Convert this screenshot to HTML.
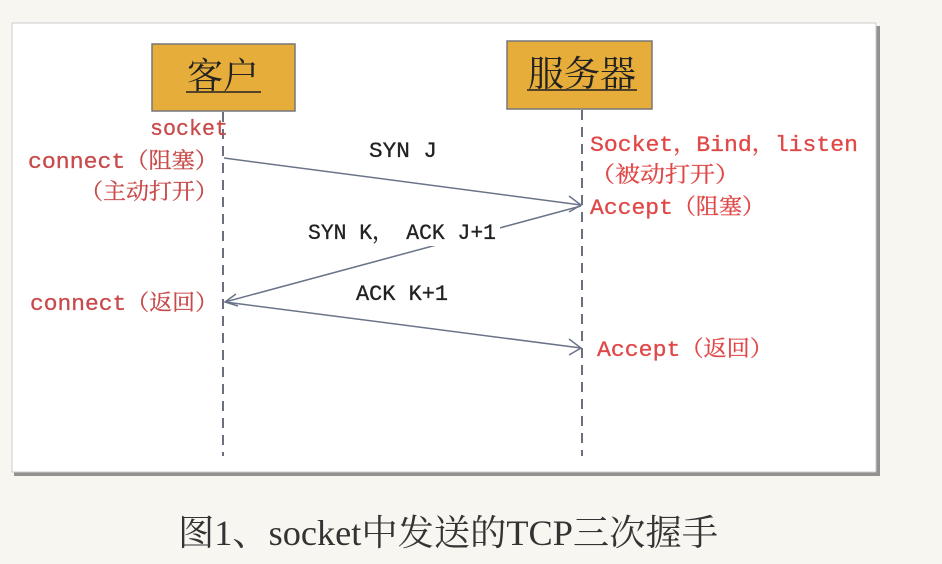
<!DOCTYPE html>
<html><head><meta charset="utf-8"><style>
html,body{margin:0;padding:0;background:#f8f6f0;width:942px;height:564px;overflow:hidden}
</style></head><body>
<svg width="942" height="564" style="position:absolute;left:0;top:0" font-family="Liberation Mono, Noto Serif CJK SC, monospace">
<rect x="14" y="26" width="866" height="450" fill="#666" opacity="0.7"/>
<rect x="12" y="23" width="864" height="449" fill="#fff" stroke="#ccc" stroke-width="1"/>
<rect x="152" y="44" width="143" height="67" fill="#e6ad3a" stroke="#777" stroke-width="1.5"/>
<rect x="507" y="41" width="145" height="68" fill="#e6ad3a" stroke="#777" stroke-width="1.5"/>
<text x="223" y="88" font-size="36" text-anchor="middle" fill="#222" font-family="Noto Serif CJK SC, serif">客户</text>
<line x1="186" y1="92" x2="261" y2="92" stroke="#222" stroke-width="1.5"/>
<text x="582" y="86" font-size="36" text-anchor="middle" fill="#222" font-family="Noto Serif CJK SC, serif">服务器</text>
<line x1="527" y1="90" x2="637" y2="90" stroke="#222" stroke-width="1.5"/>
<g stroke="#6a7080" stroke-width="2" stroke-dasharray="10,7">
<line x1="223" y1="112" x2="223" y2="456"/>
<line x1="582" y1="110" x2="582" y2="456"/>
</g>
<g stroke="#6a7488" stroke-width="1.5" fill="none">
<line x1="224" y1="158" x2="581" y2="205"/>
<line x1="581" y1="206" x2="225" y2="302"/>
<line x1="225" y1="302" x2="581" y2="348"/>
<polyline points="569,196 581,205 569,212"/>
<polyline points="236,294 225,302 238,306"/>
<polyline points="569,339 581,348 569,355"/>
</g>
<rect x="300" y="218" width="200" height="28" fill="#fff"/>
<g font-size="22" fill="#222" stroke="#222" stroke-width="0.3">
<text x="369" y="157" textLength="68" lengthAdjust="spacingAndGlyphs">SYN J</text>
<text x="308" y="239" textLength="188" lengthAdjust="spacingAndGlyphs">SYN K， ACK J+1</text>
<text x="356" y="300" textLength="92" lengthAdjust="spacingAndGlyphs">ACK K+1</text>
</g>
<g font-size="22" fill="#c84a4a" stroke="#c84a4a" stroke-width="0.3">
<text x="150" y="135" textLength="78" lengthAdjust="spacingAndGlyphs">socket</text>
<text x="28" y="168" textLength="190" lengthAdjust="spacingAndGlyphs">connect（阻塞）</text>
<text x="80" y="199" textLength="138" lengthAdjust="spacingAndGlyphs">（主动打开）</text>
<text x="30" y="310" textLength="188" lengthAdjust="spacingAndGlyphs">connect（返回）</text>
</g>
<g font-size="22" fill="#e04848" stroke="#e04848" stroke-width="0.3">
<text x="590" y="151" textLength="268" lengthAdjust="spacingAndGlyphs">Socket，Bind，listen</text>
<text x="590" y="182" textLength="150" lengthAdjust="spacingAndGlyphs">（被动打开）</text>
<text x="590" y="214" textLength="175" lengthAdjust="spacingAndGlyphs">Accept（阻塞）</text>
<text x="597" y="356" textLength="176" lengthAdjust="spacingAndGlyphs">Accept（返回）</text>
</g>
<text x="178" y="545" font-size="36" fill="#333" textLength="540" lengthAdjust="spacingAndGlyphs" font-family="Liberation Serif, Noto Serif CJK SC, serif">图1、socket中发送的TCP三次握手</text>
</svg>
</body></html>
